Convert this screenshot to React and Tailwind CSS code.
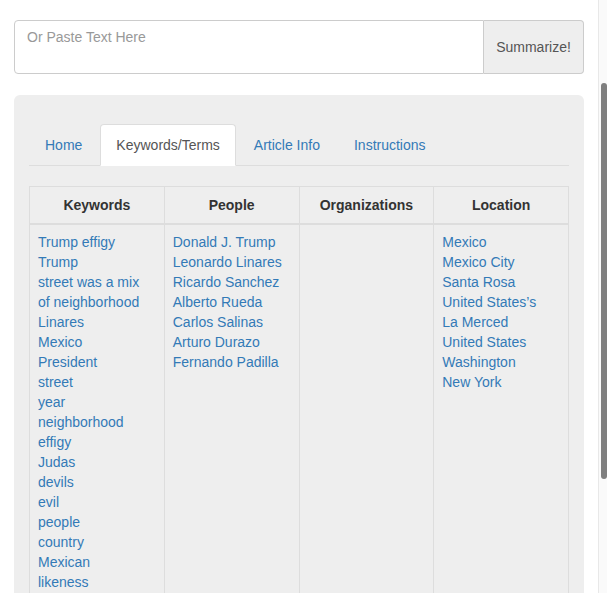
import React, { useState } from 'react';

const keywords = [
    'Trump effigy', 'Trump', 'street was a mix of neighborhood', 'Linares', 'Mexico', 'President',
    'street', 'year', 'neighborhood', 'effigy', 'Judas', 'devils', 'evil', 'people', 'country',
    'Mexican', 'likeness',
];
const people = [
    'Donald J. Trump', 'Leonardo Linares', 'Ricardo Sanchez', 'Alberto Rueda', 'Carlos Salinas',
    'Arturo Durazo', 'Fernando Padilla',
];
const organizations = [];
const locations = [
    'Mexico', 'Mexico City', 'Santa Rosa', 'United States’s', 'La Merced', 'United States',
    'Washington', 'New York',
];

const tabs = ['Home', 'Keywords/Terms', 'Article Info', 'Instructions'];

function Column({ items }) {
    return (
        <td className="align-top border border-[#ddd] pl-2 pr-4 pt-[7px] pb-2 leading-5">
            {items.map((t, i) => (
                <div key={i}>
                    <a href="#" className="text-[#337ab7] hover:underline">{t}</a>
                </div>
            ))}
        </td>
    );
}

export default function App() {
    const [active, setActive] = useState('Keywords/Terms');
    const [text, setText] = useState('');

    return (
        <div className="h-[593px] overflow-hidden flex bg-white text-[14px] text-[#333] font-['Liberation_Sans',Helvetica,Arial,sans-serif]">
            <div className="flex-1 px-[14px] pt-[20px]">
                {/* input group */}
                <div className="flex h-[54px]">
                    <textarea
                        value={text}
                        onChange={e => setText(e.target.value)}
                        placeholder="Or Paste Text Here"
                        className="flex-1 resize-none border border-[#ccc] rounded-l-[4px] px-3 py-[6px] leading-5 placeholder:text-[#999] outline-none"
                    />
                    <button className="w-[100px] bg-[#eee] border border-l-0 border-[#ccc] rounded-r-[4px] text-[#555]">
                        Summarize!
                    </button>
                </div>

                {/* panel */}
                <div className="mt-[21px] bg-[#eee] rounded-[6px] px-[15px] pt-[29px] h-[600px]">
                    <ul className="flex border-b border-[#ddd]">
                        {tabs.map(t => (
                            <li key={t} className="mr-[2px] -mb-px">
                                <button
                                    onClick={() => setActive(t)}
                                    className={
                                        t === active
                                            ? 'px-[15px] py-[10px] leading-5 border border-[#ddd] border-b-white bg-white rounded-t-[4px] text-[#555]'
                                            : 'px-[15px] py-[10px] leading-5 border border-transparent text-[#337ab7]'
                                    }
                                >
                                    {t}
                                </button>
                            </li>
                        ))}
                    </ul>

                    <table className="mt-5 w-full table-fixed border-collapse border border-[#ddd]">
                        <thead>
                            <tr>
                                {['Keywords', 'People', 'Organizations', 'Location'].map(h => (
                                    <th key={h} className="border border-[#ddd] border-b-2 p-2 leading-5 font-bold text-center">
                                        {h}
                                    </th>
                                ))}
                            </tr>
                        </thead>
                        <tbody>
                            <tr>
                                <Column items={keywords} />
                                <Column items={people} />
                                <Column items={organizations} />
                                <Column items={locations} />
                            </tr>
                        </tbody>
                    </table>
                </div>
            </div>

            {/* scrollbar */}
            <div className="w-[9px] border-l border-[#e8e8e8] bg-[#fafafa] pt-[83px]">
                <div className="ml-[2px] w-[6px] h-[396px] rounded-full bg-[#7f7f7f]" />
            </div>
        </div>
    );
}
